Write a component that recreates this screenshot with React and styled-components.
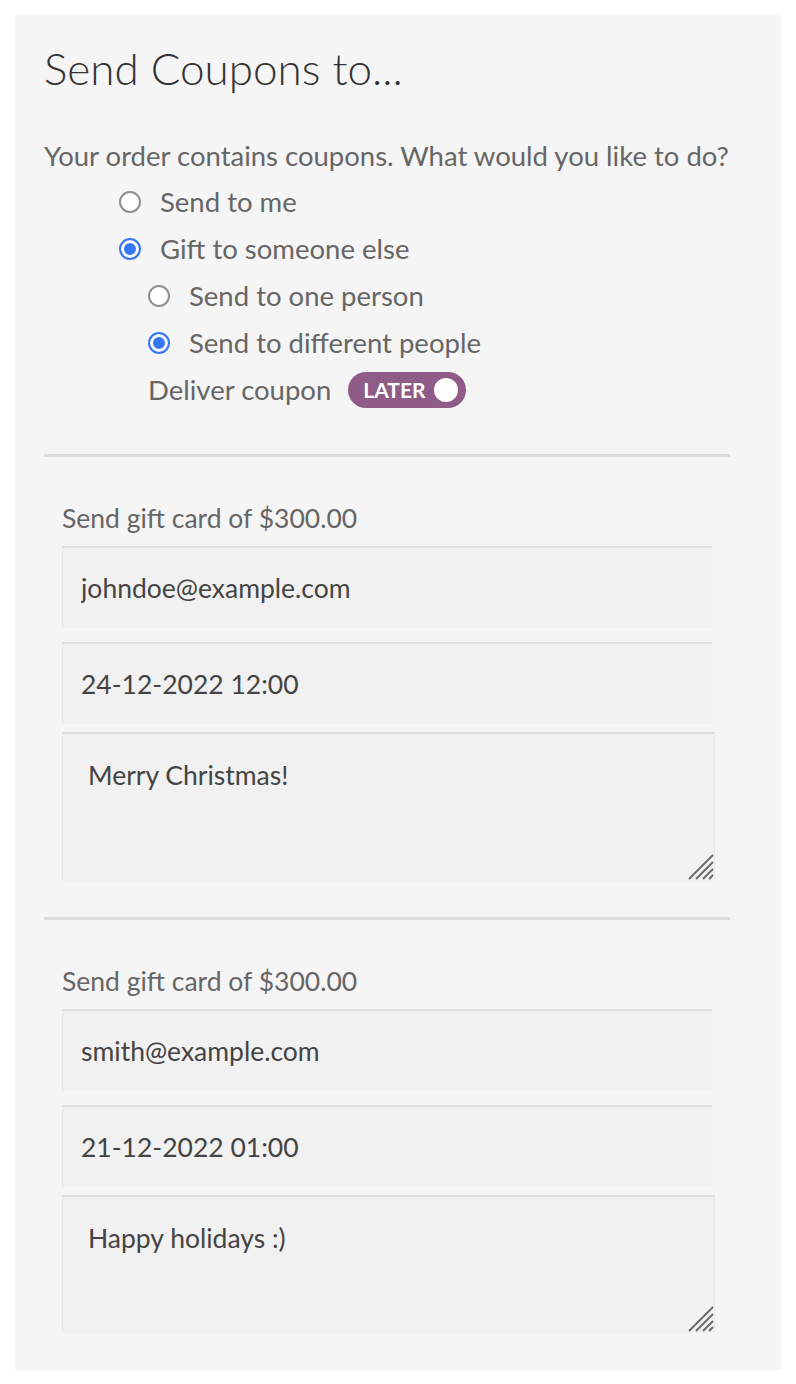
import styled, { createGlobalStyle } from 'styled-components';

const GlobalStyle = createGlobalStyle`
  html, body {
    margin: 0;
    background: #fff;
  }
  body {
    font-family: 'Lato', 'Open Sans', sans-serif;
  }
`;

const recipients = [
  {
    email: 'johndoe@example.com',
    date: '24-12-2022 12:00',
    message: 'Merry Christmas!',
    height: 149,
  },
  {
    email: 'smith@example.com',
    date: '21-12-2022 01:00',
    message: 'Happy holidays :)',
    height: 138,
  },
];

function Radio({ label, checked, nested }) {
  return (
    <RadioRow $nested={nested}>
      <RadioDot $checked={checked} />
      <span>{label}</span>
    </RadioRow>
  );
}

function Grip() {
  return (
    <GripIcon width="26" height="26" viewBox="0 0 26 26">
      <g stroke="#6b6b6b" strokeWidth="2">
        <line x1="1" y1="25" x2="25" y2="1" />
        <line x1="8" y1="25" x2="25" y2="8" />
        <line x1="15" y1="25" x2="25" y2="15" />
        <line x1="21" y1="25" x2="25" y2="21" />
      </g>
    </GripIcon>
  );
}

export default function App() {
  return (
    <>
      <GlobalStyle />
      <Panel>
        <Title>Send Coupons to...</Title>
        <Question>Your order contains coupons. What would you like to do?</Question>
        <Options>
          <Radio label="Send to me" />
          <Radio label="Gift to someone else" checked />
          <Radio label="Send to one person" nested />
          <Radio label="Send to different people" checked nested />
          <DeliverRow>
            <span>Deliver coupon</span>
            <Toggle>
              LATER
              <ToggleKnob />
            </Toggle>
          </DeliverRow>
        </Options>

        {recipients.map((r, i) => (
          <Recipient key={r.email} $first={i === 0}>
            <Divider />
            <GiftLabel>Send gift card of $300.00</GiftLabel>
            <Field type="text" defaultValue={r.email} />
            <Field type="text" defaultValue={r.date} />
            <TextareaWrap $height={r.height}>
              <Message defaultValue={r.message} />
              <Grip />
            </TextareaWrap>
          </Recipient>
        ))}
      </Panel>
    </>
  );
}

const Panel = styled.div`
  box-sizing: border-box;
  margin: 15px;
  background: #f5f5f5;
  padding: 19px 29px 36px;
  height: 1355px;
  overflow: hidden;
`;

const Title = styled.h3`
  margin: 0;
  font-size: 44px;
  font-weight: 300;
  color: #333;
  line-height: 68px;
`;

const Question = styled.p`
  margin: 39px 0 0;
  font-size: 27.5px;
  line-height: 30px;
  color: #666;
`;

const Options = styled.div`
  display: flex;
  flex-direction: column;
  gap: 17px;
  margin-top: 16px;
  padding-left: 75px;
`;

const RadioRow = styled.label`
  display: flex;
  align-items: center;
  gap: 19px;
  margin-left: ${(p) => (p.$nested ? '29px' : '0')};
  font-size: 27.5px;
  line-height: 30px;
  color: #666;
`;

const RadioDot = styled.span`
  width: 22px;
  height: 22px;
  box-sizing: border-box;
  border-radius: 50%;
  background: #fff;
  border: 2px solid ${(p) => (p.$checked ? '#3478f6' : '#8e8e93')};
  box-shadow: ${(p) =>
    p.$checked ? 'inset 0 0 0 3px #fff, inset 0 0 0 9px #3478f6' : 'none'};
`;

const DeliverRow = styled.div`
  display: flex;
  align-items: center;
  gap: 17px;
  margin: -3px 0 0 29px;
  font-size: 27.5px;
  line-height: 30px;
  color: #666;
`;

const Toggle = styled.span`
  display: inline-flex;
  align-items: center;
  gap: 8px;
  height: 36px;
  padding: 0 8px 0 15px;
  border-radius: 18px;
  background: #8f5b88;
  color: #fff;
  font-size: 21px;
  font-weight: 700;
`;

const ToggleKnob = styled.span`
  width: 24px;
  height: 24px;
  border-radius: 50%;
  background: #fff;
`;

const Recipient = styled.div`
  display: flex;
  flex-direction: column;
  margin-top: ${(p) => (p.$first ? '46px' : '36px')};
`;

const Divider = styled.hr`
  width: 686px;
  margin: 0;
  border: 0;
  height: 3px;
  background: #dcdcdc;
`;

const GiftLabel = styled.div`
  margin: 46px 0 0 18px;
  font-size: 26.5px;
  line-height: 30px;
  color: #666;
`;

const Field = styled.input`
  box-sizing: border-box;
  width: 650px;
  height: 82px;
  margin: 13px 0 0 18px;
  padding: 0 18px;
  border: 0;
  border-top: 2px solid #dedede;
  border-left: 1px solid #e8e8e8;
  background: #f1f1f1;
  font-family: inherit;
  font-size: 26.5px;
  color: #444;
  outline: none;
  & + & {
    margin-top: 14px;
  }
`;

const TextareaWrap = styled.div`
  position: relative;
  width: 653px;
  height: ${(p) => p.$height}px;
  margin: 8px 0 0 18px;
`;

const Message = styled.textarea`
  box-sizing: border-box;
  display: block;
  width: 100%;
  height: 100%;
  padding: 26px 25px;
  border: 0;
  border-top: 2px solid #dedede;
  border-left: 1px solid #e8e8e8;
  border-right: 1px solid #e8e8e8;
  background: #f1f1f1;
  font-family: inherit;
  font-size: 26.5px;
  line-height: 30px;
  color: #444;
  resize: none;
  outline: none;
`;

const GripIcon = styled.svg`
  position: absolute;
  right: 1px;
  bottom: 1px;
`;
